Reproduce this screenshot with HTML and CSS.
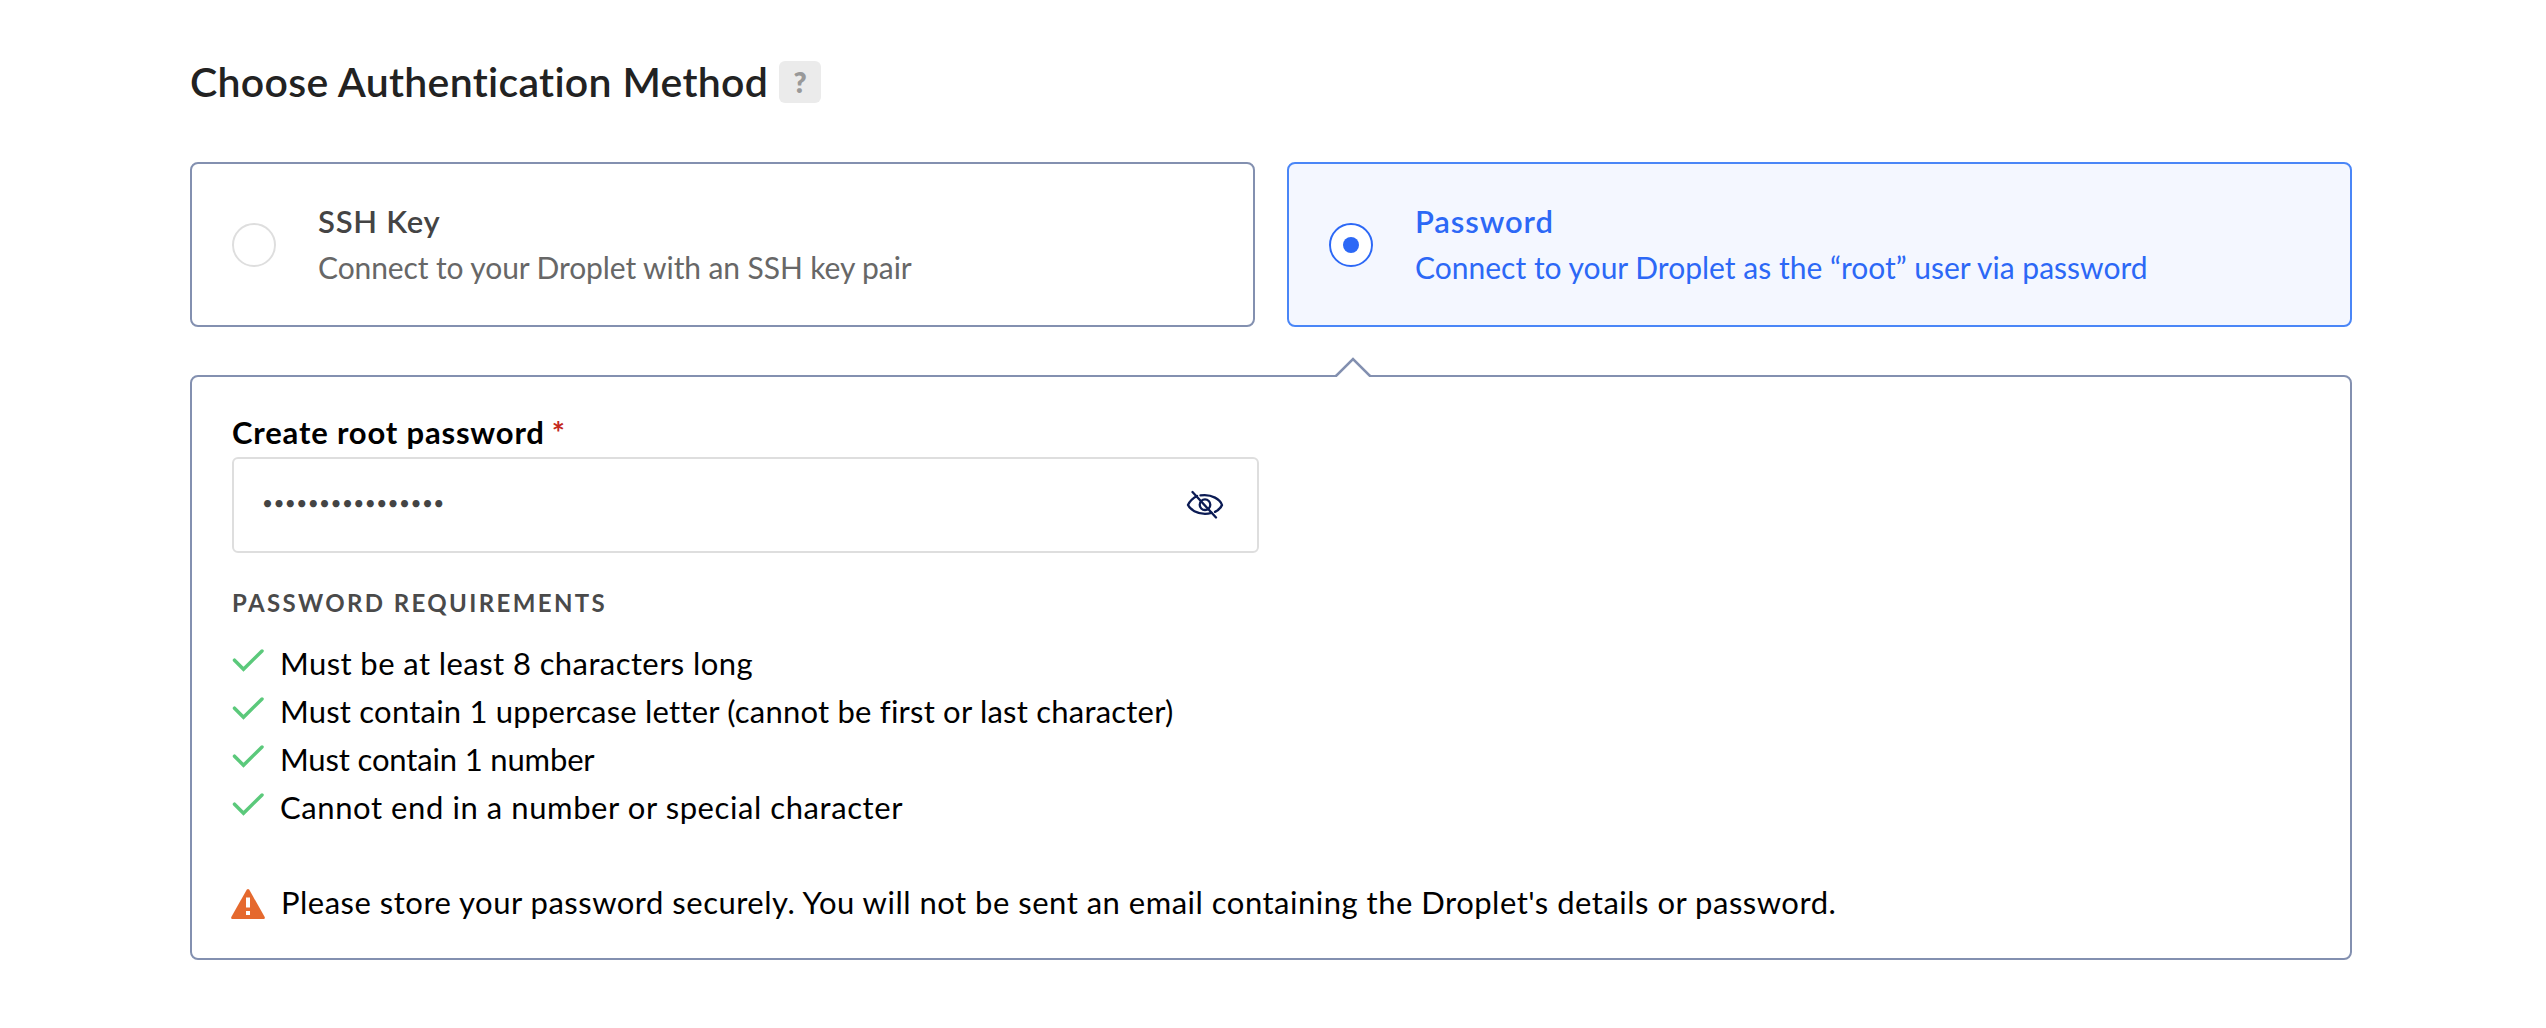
FILE: index.html
```html
<!DOCTYPE html>
<html lang="en">
<head>
<meta charset="utf-8">
<title>Choose Authentication Method</title>
<link rel="stylesheet" href="styles.css">
</head>
<body>
<main class="page">
  <header class="heading">
    <h1 class="title">Choose Authentication Method</h1>
    <span class="help">?</span>
  </header>

  <section class="methods">
    <div class="method">
      <span class="radio"></span>
      <div class="method-text">
        <div class="method-name name-ssh">SSH Key</div>
        <div class="method-desc">Connect to your Droplet with an SSH key pair</div>
      </div>
    </div>
    <div class="method selected">
      <span class="radio"></span>
      <div class="method-text">
        <div class="method-name">Password</div>
        <div class="method-desc">Connect to your Droplet as the “root” user via password</div>
      </div>
    </div>
  </section>

  <section class="panel">
    <svg class="pointer" width="40" height="22" viewBox="0 0 40 22"><path class="pointer-fill" d="M2.500 22 20 4l17.500 18z"/><path class="pointer-line" d="M2 21h1L20 4l17 17h1"/></svg>
    <div class="label">Create root password<span class="required">*</span></div>
    <div class="field">
      <span class="dots">••••••••••••••••</span>
      <svg class="eye" width="38" height="30" viewBox="0 0 38 30"><path d="M11 5.900C6.500 8.300 3.200 12 2 15c2.300 4.700 9 8.800 17 8.800 2.300 0 4.500-.4 6.500-1M14.500 5.400C26 3.500 34.500 10 36 15c-1 2.600-3.600 5.200-7 6.900"/><circle cx="19" cy="14.700" r="5.300"/><path d="M6.500 2 30 27.500"/></svg>
    </div>
    <h2 class="subhead">PASSWORD REQUIREMENTS</h2>
    <ul class="rules">
      <li class="rule"><svg class="check" width="32" height="24" viewBox="0 0 32 24"><path d="M2.500 11.200l9 9L30 2"/></svg><span>Must be at least 8 characters long</span></li>
      <li class="rule rule-case"><svg class="check" width="32" height="24" viewBox="0 0 32 24"><path d="M2.500 11.200l9 9L30 2"/></svg><span>Must contain 1 uppercase letter (cannot be first or last character)</span></li>
      <li class="rule rule-number"><svg class="check" width="32" height="24" viewBox="0 0 32 24"><path d="M2.500 11.200l9 9L30 2"/></svg><span>Must contain 1 number</span></li>
      <li class="rule rule-end"><svg class="check" width="32" height="24" viewBox="0 0 32 24"><path d="M2.500 11.200l9 9L30 2"/></svg><span>Cannot end in a number or special character</span></li>
    </ul>
    <div class="notice">
      <svg class="warn" width="34" height="30" viewBox="0 0 34 30"><path class="warn-shape" d="M15.700.8q1.300-1.600 2.600 0L33.700 28q.7 2-1.200 2h-31Q-.4 30 .3 28z"/><path class="warn-mark" d="M15 8.500h4v10h-4zM15 22h4v4h-4z"/></svg>
      <span>Please store your password securely. You will not be sent an email containing the Droplet's details or password.</span>
    </div>
  </section>
</main>
</body>
</html>
```
FILE: styles.css
```css
* { box-sizing: border-box; }
body {
  margin: 0;
  background: #fff;
  color: #000;
  font-family: Lato, "Open Sans", sans-serif;
  font-variant-ligatures: none;
}
.page { width: 2162px; margin-left: 190px; padding-top: 61px; }

.heading { display: flex; align-items: center; height: 42px; }
.title {
  margin: 0 11px 0 0;
  padding-bottom: 1px;
  font-size: 41px;
  font-weight: 600;
  line-height: 42px;
  letter-spacing: 0.31px;
  color: #222;
  white-space: nowrap;
}
.help {
  width: 42px;
  height: 42px;
  border-radius: 6px;
  background: #ebebeb;
  color: #999;
  font-size: 28px;
  font-weight: 800;
  line-height: 43px;
  text-align: center;
}

.methods { display: grid; grid-template-columns: 1fr 1fr; gap: 32px; margin-top: 59px; }
.method {
  display: flex;
  align-items: center;
  gap: 42px;
  height: 165px;
  padding: 0 40px;
  border: 2px solid #8390b0;
  border-radius: 8px;
}
.selected { border-color: #4a86f7; background: #f4f7ff; }
.radio {
  display: flex;
  align-items: center;
  justify-content: center;
  width: 44px;
  height: 44px;
  border: 2px solid #dedede;
  border-radius: 50%;
  background: #fff;
}
.selected .radio { border-color: #2c68f6; }
.selected .radio::before {
  content: "";
  width: 16px;
  height: 16px;
  border-radius: 50%;
  background: #2c68f6;
}
.method-text { padding-bottom: 1px; line-height: 46px; white-space: nowrap; }
.method-name { font-size: 31px; font-weight: 600; letter-spacing: 0.9px; color: #444; }
.name-ssh { letter-spacing: 0.75px; }
.method-desc { font-size: 30px; letter-spacing: -0.1px; color: #676767; }
.selected .method-name, .selected .method-desc { color: #2c68f6; }
.selected .method-desc { letter-spacing: 0.01px; }

.panel {
  position: relative;
  height: 585px;
  margin-top: 48px;
  padding: 35px 40px 0;
  border: 2px solid #8390b0;
  border-radius: 8px;
}
.pointer { position: absolute; left: 1141px; top: -22px; }
.pointer-fill { fill: #fff; }
.pointer-line { fill: none; stroke: #8390b0; stroke-width: 2.500; }
.label {
  height: 40px;
  margin-bottom: 5px;
  font-size: 31px;
  font-weight: 700;
  line-height: 40px;
  letter-spacing: 0.82px;
}
.required { margin-left: 7px; color: #c4281c; }
.field {
  display: flex;
  align-items: center;
  justify-content: space-between;
  width: 1027px;
  height: 96px;
  padding: 0 33px 0 28px;
  border: 2px solid #dedede;
  border-radius: 6px;
}
.dots { padding-bottom: 4px; font-size: 19px; line-height: 30px; letter-spacing: 0.4px; color: #444; }
.eye { fill: none; stroke: #0b1b54; stroke-width: 2.300; stroke-linecap: round; }
.subhead {
  margin: 35px 0 21px;
  font-size: 24px;
  font-weight: 700;
  line-height: 30px;
  letter-spacing: 2.37px;
  color: #4a4a4a;
}
.rules { margin: 0; padding: 0; list-style: none; }
.rule, .notice {
  display: flex;
  align-items: center;
  height: 48px;
  font-size: 31px;
  letter-spacing: 0.42px;
  white-space: nowrap;
}
.rule { gap: 16px; }
.rule-case { letter-spacing: 0.22px; }
.rule-number { letter-spacing: -0.15px; }
.rule-end { letter-spacing: 0.58px; }
.check { margin-bottom: 5px; fill: none; stroke: #5bc97b; stroke-width: 3.500; stroke-linecap: round; }
.notice { gap: 16px; margin-top: 47px; margin-left: -1px; letter-spacing: 0.5px; }
.warn { margin-top: 3px; }
.warn-shape { fill: #e5692e; }
.warn-mark { fill: #fff; }
```
